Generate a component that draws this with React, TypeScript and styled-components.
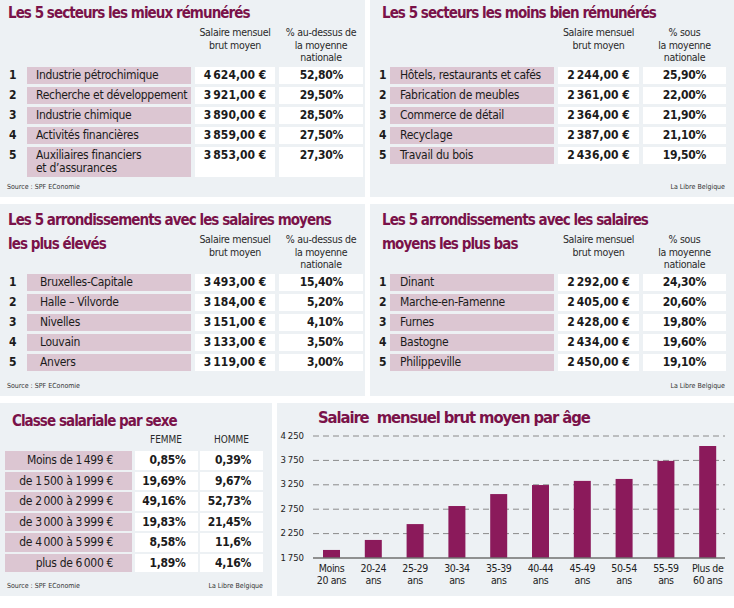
import * as React from 'react';
import styled, { createGlobalStyle } from 'styled-components';

const font = `"Liberation Sans Narrow", "DejaVu Sans Condensed", "Liberation Sans", sans-serif`;
const plum = '#7a1249';
const pink = '#dcc6d2';
const panelBg = '#edf1f4';
const barColor = '#8b1a5b';

const GlobalStyle = createGlobalStyle`
  html, body { margin: 0; padding: 0; background: #fff; }
  body { font-family: ${font}; font-stretch: condensed; color: #1b1b1b; }
`;

const Page = styled.div`
  width: 734px;
  display: flex;
  flex-direction: column;
  gap: 7px;
`;

const Band = styled.div<{ $cols: string; $height: number }>`
  display: grid;
  grid-template-columns: ${(p) => p.$cols};
  column-gap: 5px;
  height: ${(p) => p.$height}px;
`;

const Panel = styled.section<{ $top?: number }>`
  background: ${panelBg};
  display: flex;
  flex-direction: column;
  padding: ${(p) => p.$top ?? 2}px 0 5px 0;
  box-sizing: border-box;
  min-width: 0;
`;

const Title = styled.h2<{ $indent: number }>`
  margin: 0;
  padding-left: ${(p) => p.$indent}px;
  font-size: 15px;
  letter-spacing: -0.95px;
  line-height: 22px;
  font-weight: 700;
  color: ${plum};
  white-space: nowrap;
`;

const RankGrid = styled.div<{ $cols: string }>`
  display: grid;
  grid-template-columns: ${(p) => p.$cols};
  column-gap: 4px;
  row-gap: 3px;
  margin-top: 2px;
`;

const HeadTitle = styled(Title)`
  grid-column: span 2;
`;

const HeadText = styled.div`
  font-size: 10.5px;
  letter-spacing: -0.3px;
  line-height: 12.5px;
  text-align: center;
  white-space: nowrap;
  color: #2a2a2a;
`;

const Rank = styled.div`
  font-weight: 700;
  font-size: 12px;
  line-height: 13px;
  padding: 2px 0 2px 9px;
`;

const LabelCell = styled.div<{ $indent: number }>`
  background: ${pink};
  font-size: 12px;
  letter-spacing: -0.3px;
  line-height: 13px;
  padding: 2px 4px 2px ${(p) => p.$indent}px;
  white-space: nowrap;
`;

const ValueCell = styled.div<{ $align: 'center' | 'right'; $pad?: number }>`
  background: #fff;
  font-weight: 700;
  font-size: 12px;
  letter-spacing: -0.3px;
  line-height: 13px;
  padding: 2px ${(p) => p.$pad ?? 0}px 2px 0;
  text-align: ${(p) => p.$align};
  white-space: nowrap;
`;

const Footer = styled.div`
  margin-top: auto;
  display: flex;
  justify-content: space-between;
  padding: 0 9px 0 7px;
  font-size: 7px;
  line-height: 10px;
  color: #333;
`;

/* sex table */
const SexGrid = styled.div`
  display: grid;
  grid-template-columns: 127px 63px 63px;
  column-gap: 2.5px;
  row-gap: 2px;
  padding-left: 5px;
  margin-top: 1px;
`;

const SexHead = styled.div`
  font-size: 10px;
  line-height: 14px;
  text-align: center;
  padding-bottom: 2px;
  color: #2a2a2a;
`;

const SexLabel = styled.div`
  background: ${pink};
  font-size: 12px;
  letter-spacing: -0.35px;
  line-height: 18.5px;
  text-align: right;
  padding-right: 19px;
  white-space: nowrap;
`;

const SexValue = styled.div`
  background: #fff;
  font-size: 12px;
  letter-spacing: -0.3px;
  font-weight: 700;
  line-height: 18.5px;
  text-align: right;
  padding-right: 12px;
`;

const ChartTitle = styled(Title)`
  font-size: 16.5px;
  letter-spacing: -1.1px;
  line-height: 26px;
`;

const ChartSvg = styled.svg`
  display: block;
  font-family: ${font};
  font-stretch: condensed;
`;

type Entry = { label: React.ReactNode; salary: string; pct: string };

const sp = '\u202F';
const eur = (s: string) => s.replace(' ', sp) + '\u00A0€';

const best: Entry[] = [
  { label: 'Industrie pétrochimique', salary: eur('4 624,00'), pct: '52,80%' },
  { label: 'Recherche et développement', salary: eur('3 921,00'), pct: '29,50%' },
  { label: 'Industrie chimique', salary: eur('3 890,00'), pct: '28,50%' },
  { label: 'Activités financières', salary: eur('3 859,00'), pct: '27,50%' },
  { label: <>Auxiliaires financiers<br />et d’assurances</>, salary: eur('3 853,00'), pct: '27,30%' },
];

const worst: Entry[] = [
  { label: 'Hôtels, restaurants et cafés', salary: eur('2 244,00'), pct: '25,90%' },
  { label: 'Fabrication de meubles', salary: eur('2 361,00'), pct: '22,00%' },
  { label: 'Commerce de détail', salary: eur('2 364,00'), pct: '21,90%' },
  { label: 'Recyclage', salary: eur('2 387,00'), pct: '21,10%' },
  { label: 'Travail du bois', salary: eur('2 436,00'), pct: '19,50%' },
];

const highDistricts: Entry[] = [
  { label: 'Bruxelles-Capitale', salary: eur('3 493,00'), pct: '15,40%' },
  { label: 'Halle – Vilvorde', salary: eur('3 184,00'), pct: '5,20%' },
  { label: 'Nivelles', salary: eur('3 151,00'), pct: '4,10%' },
  { label: 'Louvain', salary: eur('3 133,00'), pct: '3,50%' },
  { label: 'Anvers', salary: eur('3 119,00'), pct: '3,00%' },
];

const lowDistricts: Entry[] = [
  { label: 'Dinant', salary: eur('2 292,00'), pct: '24,30%' },
  { label: 'Marche-en-Famenne', salary: eur('2 405,00'), pct: '20,60%' },
  { label: 'Furnes', salary: eur('2 428,00'), pct: '19,80%' },
  { label: 'Bastogne', salary: eur('2 434,00'), pct: '19,60%' },
  { label: 'Philippeville', salary: eur('2 450,00'), pct: '19,10%' },
];

const sexRows = [
  { label: `Moins de 1${sp}499 €`, f: '0,85%', h: '0,39%' },
  { label: `de 1${sp}500 à 1${sp}999 €`, f: '19,69%', h: '9,67%' },
  { label: `de 2${sp}000 à 2${sp}999 €`, f: '49,16%', h: '52,73%' },
  { label: `de 3${sp}000 à 3${sp}999 €`, f: '19,83%', h: '21,45%' },
  { label: `de 4${sp}000 à 5${sp}999 €`, f: '8,58%', h: '11,6%' },
  { label: `plus de 6${sp}000 €`, f: '1,89%', h: '4,16%' },
];

const ages = [
  { a: 'Moins', b: '20 ans', v: 1915 },
  { a: '20-24', b: 'ans', v: 2120 },
  { a: '25-29', b: 'ans', v: 2445 },
  { a: '30-34', b: 'ans', v: 2815 },
  { a: '35-39', b: 'ans', v: 3060 },
  { a: '40-44', b: 'ans', v: 3245 },
  { a: '45-49', b: 'ans', v: 3330 },
  { a: '50-54', b: 'ans', v: 3370 },
  { a: '55-59', b: 'ans', v: 3740 },
  { a: 'Plus de', b: '60 ans', v: 4045 },
];

interface RankPanelProps {
  title: string;
  titleRest?: string;
  indent: number;
  cols: string;
  labelIndent: number;
  pctHead: string[];
  rows: Entry[];
  top?: number;
  source?: boolean;
  brand?: boolean;
}

function RankPanel(props: RankPanelProps) {
  return (
    <Panel $top={props.top}>
      <Title $indent={props.indent}>{props.title}</Title>
      <RankGrid $cols={props.cols}>
        {props.titleRest ? <HeadTitle $indent={props.indent}>{props.titleRest}</HeadTitle> : <><div /><div /></>}
        <HeadText>Salaire mensuel<br />brut moyen</HeadText>
        <HeadText>
          {props.pctHead.map((l, i) => (
            <React.Fragment key={i}>{i > 0 && <br />}{l}</React.Fragment>
          ))}
        </HeadText>
        {props.rows.map((r, i) => (
          <React.Fragment key={i}>
            <Rank>{i + 1}</Rank>
            <LabelCell $indent={props.labelIndent}>{r.label}</LabelCell>
            <ValueCell $align="center">{r.salary}</ValueCell>
            <ValueCell $align="right" $pad={20}>{r.pct}</ValueCell>
          </React.Fragment>
        ))}
      </RankGrid>
      <Footer>
        <span>{props.source ? 'Source : SPF EConomie' : ''}</span>
        <span>{props.brand ? 'La Libre Belgique' : ''}</span>
      </Footer>
    </Panel>
  );
}

function AgeChart() {
  const top = 5;
  const step = 24.4;
  const base = top + step * 5;
  const ticks = [4250, 3750, 3250, 2750, 2250, 1750];
  const y = (v: number) => base - ((v - 1750) / 500) * step;
  return (
    <ChartSvg width={457} height={160} viewBox="0 0 457 160">
      {ticks.map((t, i) => (
        <g key={t}>
          <text x={27} y={top + i * step} fontSize={9.5} letterSpacing={-0.3} textAnchor="end" dominantBaseline="middle" fill="#222">
            {String(t).replace(/(\d)(\d{3})$/, `$1${sp}$2`)}
          </text>
          {t !== 1750 && (
            <line x1={36} x2={448} y1={top + i * step} y2={top + i * step} stroke="#8a8a8a" strokeWidth={1} strokeDasharray="6 4" />
          )}
        </g>
      ))}
      {ages.map((d, i) => {
        const x = 46 + i * 41.8;
        return (
          <g key={d.a}>
            <rect x={x} y={y(d.v)} width={17} height={base - y(d.v)} fill={barColor} />
            <text x={x + 8.5} y={base + 11} fontSize={10.5} letterSpacing={-0.4} textAnchor="middle" dominantBaseline="middle" fill="#222">{d.a}</text>
            <text x={x + 8.5} y={base + 23} fontSize={10.5} letterSpacing={-0.4} textAnchor="middle" dominantBaseline="middle" fill="#222">{d.b}</text>
          </g>
        );
      })}
      <line x1={36} x2={448} y1={base} y2={base} stroke="#6f6f6f" strokeWidth={1.5} />
    </ChartSvg>
  );
}

export default function App() {
  return (
    <Page>
      <GlobalStyle />
      <Band $cols="365px 364px" $height={197}>
        <RankPanel
          title="Les 5 secteurs les mieux rémunérés"
          indent={8}
          cols="23px 164px 80px 84px"
          labelIndent={9}
          pctHead={['% au-dessus de', 'la moyenne', 'nationale']}
          rows={best}
          source
        />
        <RankPanel
          title="Les 5 secteurs les moins bien rémunérés"
          indent={12}
          cols="16px 164px 81px 83px"
          labelIndent={10}
          pctHead={['% sous', 'la moyenne', 'nationale']}
          rows={worst}
          brand
        />
      </Band>
      <Band $cols="365px 364px" $height={192}>
        <RankPanel
          title="Les 5 arrondissements avec les salaires moyens"
          titleRest="les plus élevés"
          indent={8}
          cols="23px 164px 80px 84px"
          labelIndent={13}
          pctHead={['% au-dessus de', 'la moyenne', 'nationale']}
          rows={highDistricts}
          top={5}
          source
        />
        <RankPanel
          title="Les 5 arrondissements avec les salaires"
          titleRest="moyens les plus bas"
          indent={12}
          cols="16px 164px 81px 83px"
          labelIndent={10}
          pctHead={['% sous', 'la moyenne', 'nationale']}
          rows={lowDistricts}
          top={5}
          brand
        />
      </Band>
      <Band $cols="272px 457px" $height={193}>
        <Panel $top={7}>
          <Title $indent={12}>Classe salariale par sexe</Title>
          <SexGrid>
            <div />
            <SexHead>FEMME</SexHead>
            <SexHead>HOMME</SexHead>
            {sexRows.map((r) => (
              <React.Fragment key={r.label}>
                <SexLabel>{r.label}</SexLabel>
                <SexValue>{r.f}</SexValue>
                <SexValue>{r.h}</SexValue>
              </React.Fragment>
            ))}
          </SexGrid>
          <Footer>
            <span>Source : SPF EConomie</span>
            <span>La Libre Belgique</span>
          </Footer>
        </Panel>
        <Panel>
          <ChartTitle $indent={41}>Salaire&nbsp; mensuel brut moyen par âge</ChartTitle>
          <AgeChart />
        </Panel>
      </Band>
    </Page>
  );
}
